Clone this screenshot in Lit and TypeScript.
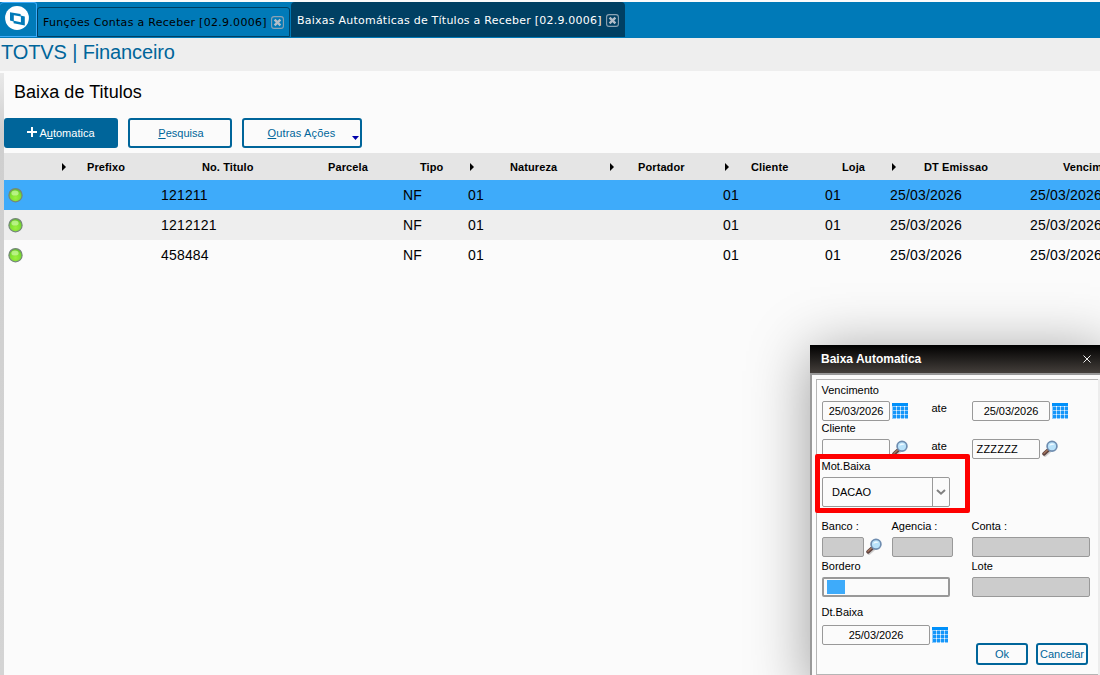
import { LitElement, html, css, svg } from "lit";
import { customElement, property } from "lit/decorators.js";

const base = css`
  :host { box-sizing: border-box; }
  *, *::before, *::after { box-sizing: border-box; }
`;

const calendarIcon = html`<svg class="icon" width="16" height="16" viewBox="0 0 16 16" shape-rendering="crispEdges">
  <path fill="#1496fa" d="M0 0h16v16H0z" />
  <path fill="#0090fa" d="M0 0h16v3H0z" />
  ${[3, 7, 11, 15].map((y) => svg`<path fill="#8fcbfc" d="M0 ${y}h16v1H0z" />`)}
  ${[4, 8, 12].map((x) => svg`<path fill="#a5d6fd" d="M${x} 3h1v13h-1z" />`)}
  <path fill="#8fcbfc" d="M0 3h1v13H0z" />
  ${[3, 7, 11, 15].map((y) => [4, 8, 12].map((x) => svg`<path fill="#f0f8ff" d="M${x} ${y}h1v1h-1z" />`))}
</svg>`;

const lensIcon = html`<svg class="icon" width="17" height="17" viewBox="0 0 17 17">
  <path d="M3 15.4 7.6 11.4" stroke="#cfcfcf" stroke-width="3.2" stroke-linecap="round" />
  <path d="M2 13.8 6.4 9.8" stroke="#5f4440" stroke-width="3.6" stroke-linecap="round" />
  <path d="M2 13.2 5.4 10.2" stroke="#a87860" stroke-width="1.3" stroke-linecap="round" />
  <circle cx="10" cy="6.2" r="4.9" fill="#b9e2fa" stroke="#6f8db0" stroke-width="1.7" />
  <path d="M7.2 5.8A3.2 3.2 0 0 1 12.6 4.4Q10 4.5 7.2 5.8Z" fill="#f1faff" />
</svg>`;

@customElement("app-tabs")
class AppTabs extends LitElement {
  static styles = [base, css`
    :host { display: flex; height: 36px; background: #007ab8; font: 11px "DejaVu Sans", Verdana, sans-serif; }
    .home { width: 37px; height: 35px; border: 1px solid #3eabfa; border-left: 0; border-radius: 4px 3px 0 0; padding: 3px 0 0 4px; }
    .home svg { display: block; }
    .tab { display: flex; align-items: center; white-space: nowrap; }
    .idle { margin: 5px 0 0 0; width: 253px; height: 30px; border: 1px solid #004063; border-radius: 3px 3px 0 0; padding: 1px 0 0 5px; color: #000; }
    .active { margin-left: 1px; width: 334px; height: 35px; background: #004063; border-radius: 4px 4px 0 0; padding: 1px 0 0 6px; color: #fff; }
    .idle .name { width: 228px; letter-spacing: .29px; }
    .active .name { width: 309px; letter-spacing: .235px; }
    .close { display: block; }
    .idle .close { margin-top: -1px; }
  `];
  render() {
    const close = html`<svg class="close" width="13" height="13" viewBox="0 0 13 13">
      <rect x=".6" y=".6" width="11.8" height="11.8" rx="2.5" fill="none" stroke="#8ba3b4" stroke-width="1.1" />
      <path d="m3.6 3.6 5.8 5.8m0-5.8L3.6 9.4" stroke="#b3bec8" stroke-width="2.4" />
    </svg>`;
    return html`
      <div class="home"><svg width="26" height="26" viewBox="0 0 26 26">
        <circle cx="13" cy="12" r="11.9" fill="#fff" />
        <path d="M6 6.2 16.6 8V9.6L20.8 10.5V19.4L9.6 17.2V15.4L6 14.4Z" fill="#007ab8" />
        <path d="M9.8 9.2 16.9 10.5V16.2L9.8 14.8Z" fill="#fff" />
      </svg></div>
      <div class="tab idle"><span class="name">Funções Contas a Receber [02.9.0006]</span>${close}</div>
      <div class="tab active"><span class="name">Baixas Automáticas de Títulos a Receber [02.9.0006]</span>${close}</div>`;
  }
}

const headers: [string, string][] = [
  ["58px", ""], ["25px", ">"], ["115px", "Prefixo"], ["126px", "No. Titulo"], ["92px", "Parcela"],
  ["50px", "Tipo"], ["40px", ">"], ["100px", "Natureza"], ["28px", ">"], ["87px", "Portador"],
  ["26px", ">"], ["91px", "Cliente"], ["50px", "Loja"], ["32px", ">"], ["139px", "DT Emissao"], ["80px", "Vencimento"],
];

@customElement("title-table")
class TitleTable extends LitElement {
  @property({ attribute: false }) rows: string[] = ["121211", "1212121", "458484"];
  static styles = [base, css`
    :host { display: block; overflow: hidden; font-family: "Liberation Sans", Arial, sans-serif; color: #000; }
    .head { display: grid; height: 27px; align-items: center; background: #e5e5e5; font-size: 11px; font-weight: bold; white-space: nowrap; letter-spacing: .1px; }
    .row { display: grid; height: 30px; align-items: center; white-space: nowrap; font-size: 14px; letter-spacing: .18px;
      grid-template-columns: 4px 153px 242px 65px 255px 102px 65px 140px 80px; }
    .row:nth-child(odd) { background: #eee; }
    .row:nth-child(4) { background: #fbfbfb; }
    .row.selected { background: #3eabfa; }
    .row span { font-size: 14px; }
    .dot, .arrow { display: block; }
    .arrow { margin-top: 1px; }
  `];
  render() {
    return html`
      <div class="head" style="grid-template-columns:${headers.map((h) => h[0]).join(" ")}">
        ${headers.map(([, t]) => t === ">"
          ? html`<svg class="arrow" width="8" height="8" viewBox="0 0 8 8"><path d="M0 0 4 4 0 8Z" /></svg>`
          : html`<span>${t}</span>`)}
      </div>
      ${this.rows.map((n, i) => html`<div class="row ${i === 0 ? "selected" : ""}">
        <span></span>
        <svg class="dot" width="15" height="15" viewBox="0 0 15 15">
          <defs><radialGradient id="g" cx=".5" cy=".7" r=".65"><stop offset="0" stop-color="#9cf03c" /><stop offset=".6" stop-color="#7fdf33" /><stop offset="1" stop-color="#66c428" /></radialGradient></defs>
          <circle cx="7.5" cy="7.2" r="6.6" fill="url(#g)" stroke="#75877a" stroke-width="1.2" />
          <ellipse cx="7" cy="5" rx="3.6" ry="2.6" fill="#c9f89c" opacity=".75" />
        </svg>
        <span>${n}</span><span>NF</span><span>01</span><span>01</span><span>01</span>
        <span>25/03/2026</span><span>25/03/2026</span>
      </div>`)}`;
  }
}

@customElement("settle-dialog")
class SettleDialog extends LitElement {
  static styles = [base, css`
    :host { display: block; width: 300px; height: 345px; background: #fbfbfb; border-left: 2px solid #999;
      box-shadow: 0 6px 56px rgba(0,0,0,.38); font: 11px/12px "Liberation Sans", Arial, sans-serif; color: #000; }
    .bar { display: flex; align-items: center; margin-left: -2px; height: 28px; padding: 0 10px 0 11px; width: 290px;
      justify-content: space-between; background: linear-gradient(#000, #443f3b); color: #fff; font-size: 12px; font-weight: bold; }
    .bar svg { margin-right: -1px; }
    .frame { width: 288px; height: 302px; border-top: 2px solid #999; padding: 4px 0 0 4px; }
    .panel { width: 282px; height: 296px; border: 1px solid #b5b5b5; border-right: 0; padding: 4px 0 0 5px; box-shadow: 2px 0 0 #ededed; }
    .line { display: grid; grid-template-columns: 150px 125px; }
    .line.three { grid-template-columns: 70px 80px 125px; }
    .labels { height: 12px; white-space: nowrap; margin-left: -.5px; }
    .controls { margin-top: 5px; }
    .cell { display: flex; align-items: center; height: 20px; gap: 2px; }
    .cell .lens { margin: -2px 0 0; display: flex; }
    .icon { display: block; }
    .ate { margin: -6px 0 0 21.5px; }
    .lens + .ate { margin-left: 20.5px; }
    .input { width: 68px; height: 20px; border: 1px solid #999; border-radius: 2px; text-align: center; line-height: 18px; background: #fbfbfb; letter-spacing: -.05px; }
    .w78 { width: 78px; }
    .w42 { width: 42px; }
    .w61 { width: 61px; }
    .w108 { width: 108px; }
    .w118 { width: 118px; }
    .w128 { width: 128px; }
    .off { background: #ccc; }
    .zs { text-align: left; padding-left: 3.5px; letter-spacing: .2px; }
    .focus { border-width: 2px; padding: 1px 0 0 3px; }
    .mark { width: 18px; height: 14px; background: #3eabfa; }
    .select { display: flex; width: 128px; height: 30px; margin-top: 5px; border: 1px solid #999; border-radius: 2px; }
    .value { width: 109px; padding: 8px 0 0 9px; line-height: 12px; }
    .drop { flex: 1; border-left: 1px solid #999; display: flex; align-items: center; justify-content: center; }
    .mot { margin-top: 1px; }
    .banco { margin-top: 13px; }
    .bord { margin-top: 3px; }
    .dt { margin-top: 9px; }
    .dtc { margin-top: 7px; }
    .actions { display: flex; gap: 8px; margin: -2px 0 0 154px; }
    .btn { width: 52px; height: 22px; border: 2px solid #00659a; border-radius: 3px; color: #00659a; text-align: center; line-height: 18px; white-space: nowrap; }
  `];
  render() {
    return html`
      <div class="bar"><span>Baixa Automatica</span>
        <svg width="8" height="8" viewBox="0 0 8 8"><path d="m.5.5 7 7m0-7-7 7" stroke="#eee" /></svg></div>
      <div class="frame"><div class="panel">
        <div class="labels">Vencimento</div>
        <div class="line controls">
          <div class="cell"><div class="input">25/03/2026</div>${calendarIcon}<span class="ate">ate</span></div>
          <div class="cell"><div class="input w78">25/03/2026</div>${calendarIcon}</div>
        </div>
        <div class="labels mot">Cliente</div>
        <div class="line controls">
          <div class="cell"><div class="input"></div><span class="lens">${lensIcon}</span><span class="ate">ate</span></div>
          <div class="cell"><div class="input zs">ZZZZZZ</div><span class="lens">${lensIcon}</span></div>
        </div>
        <div class="labels mot">Mot.Baixa</div>
        <div class="select"><div class="value">DACAO</div><div class="drop">
          <svg width="10" height="8" viewBox="0 0 10 8"><path d="m1 2 4 3.7L9 2" fill="none" stroke="#808080" stroke-width="2" /></svg></div></div>
        <div class="line three labels banco"><span>Banco :</span><span>Agencia :</span><span>Conta :</span></div>
        <div class="line three controls">
          <div class="cell"><div class="input w42 off"></div><span class="lens">${lensIcon}</span></div>
          <div class="cell"><div class="input w61 off"></div></div>
          <div class="cell"><div class="input w118 off"></div></div>
        </div>
        <div class="line labels bord"><span>Bordero</span><span>Lote</span></div>
        <div class="line controls">
          <div class="cell"><div class="input w128 focus"><div class="mark"></div></div></div>
          <div class="cell"><div class="input w118 off"></div></div>
        </div>
        <div class="labels dt">Dt.Baixa</div>
        <div class="cell dtc"><div class="input w108">25/03/2026</div>${calendarIcon}</div>
        <div class="actions"><div class="btn">Ok</div><div class="btn">Cancelar</div></div>
      </div></div>`;
  }
}

@customElement("app-root")
class AppRoot extends LitElement {
  static styles = [base, css`
    :host { display: block; position: relative; width: 1100px; height: 675px; overflow: hidden; background: #fbfbfb;
      padding-top: 2px; font-family: "Liberation Sans", Arial, sans-serif; color: #000; }
    .module { height: 33px; background: #eee; color: #00659a; font-size: 20px; line-height: 28px; padding-left: 1px; letter-spacing: -.12px; }
    .work { display: flex; height: 604px; }
    .edge { width: 4px; margin-top: 2px; background: linear-gradient(#e9e9e9, #cfcfcf 60px, #d4d4d4); flex: none; }
    .main { width: 1096px; flex: none; }
    .title { margin: 0; height: 47px; padding: 9px 0 0 10px; font-size: 18px; font-weight: normal; line-height: 24px; letter-spacing: .05px; }
    .tools { display: flex; gap: 10px; height: 35px; }
    .btn { position: relative; display: flex; align-items: center; justify-content: center; width: 104px; height: 30px; border: 2px solid #00659a;
      border-radius: 3px; color: #00659a; font-size: 11px; letter-spacing: .02px; padding-left: 2px; white-space: pre; }
    .primary { width: 114px; background: #00659a; color: #fff; padding-left: 0; }
    .primary svg { margin: -3px 2px 0 0; }
    .wide { width: 120px; padding: 0 1px 0 0; letter-spacing: .15px; }
    .caret { position: absolute; right: 1px; bottom: 6px; }
    .dialog { position: absolute; left: 810px; top: 345px; }
    .highlight { position: absolute; left: 815px; top: 454px; width: 155px; height: 59px; border: 5px solid #fe0000; border-radius: 2px; }
  `];
  render() {
    return html`
      <app-tabs></app-tabs>
      <div class="module">TOTVS | Financeiro</div>
      <div class="work">
        <div class="edge"></div>
        <div class="main">
          <h1 class="title">Baixa de Titulos</h1>
          <div class="tools">
            <div class="btn primary"><svg width="10" height="10" viewBox="0 0 10 10"><path d="M5 0v10M0 5h10" stroke="#fff" stroke-width="2" /></svg>A<u>u</u>tomatica</div>
            <div class="btn"><u>P</u>esquisa</div>
            <div class="btn wide"><u>O</u>utras Ações<svg class="caret" width="7" height="4" viewBox="0 0 7 4"><path d="M0 0h7L3.5 4Z" fill="#00a" /></svg></div>
          </div>
          <title-table></title-table>
        </div>
      </div>
      <settle-dialog class="dialog"></settle-dialog>
      <div class="highlight"></div>`;
  }
}
